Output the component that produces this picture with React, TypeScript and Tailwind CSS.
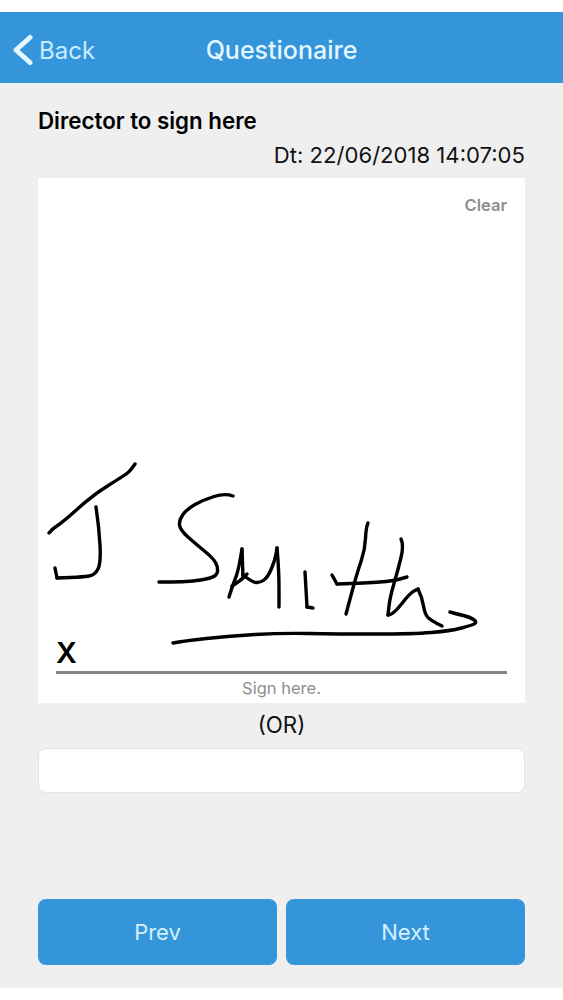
import React from "react";

type Pt = [number, number];

// signature strokes, page coordinates
const strokes: Pt[][] = [
  [[49, 533], [52, 529], [63, 522], [93, 495], [125, 475], [130, 471], [135, 464]],
  [[96, 507], [99, 527], [101, 563], [95, 575], [83, 577], [57, 578]],
  [[57, 578], [55, 568]],
  [[233, 496], [225, 493], [203, 500], [187, 509], [179, 520], [180, 530], [197, 545], [213, 558], [218, 567], [217, 576], [203, 580], [183, 582], [159, 582]],
  [[229, 597], [232, 587], [238, 572], [242, 549]],
  [[242, 549], [243, 577]],
  [[232, 586], [240, 581], [247, 574]],
  [[243, 575], [252, 582], [260, 583], [268, 577], [275, 560], [277, 548]],
  [[277, 548], [279, 570], [279, 607]],
  [[305, 572], [307, 607]],
  [[307, 607], [313, 608]],
  [[368, 523], [366, 527], [365, 550], [357, 573], [346, 614]],
  [[332, 575], [337, 584]],
  [[337, 584], [367, 583], [393, 581], [407, 577]],
  [[401, 539], [404, 545], [398, 570], [390, 597], [388, 615]],
  [[388, 615], [393, 615], [410, 593], [418, 589]],
  [[418, 589], [422, 597], [425, 615], [432, 621], [442, 626]],
  [[173, 643], [183, 641], [230, 636], [280, 633], [337, 634], [413, 634], [450, 631], [473, 625], [477, 622], [470, 617], [457, 614], [450, 612]],
];

function toPath(pts: Pt[]) {
  let d = `M${pts[0][0]} ${pts[0][1]}`;
  for (let i = 1; i < pts.length - 1; i++) {
    const mx = (pts[i][0] + pts[i + 1][0]) / 2;
    const my = (pts[i][1] + pts[i + 1][1]) / 2;
    d += ` Q${pts[i][0]} ${pts[i][1]} ${mx} ${my}`;
  }
  const last = pts[pts.length - 1];
  return d + ` L${last[0]} ${last[1]}`;
}

function Signature() {
  return (
    <svg
      className="absolute inset-0 h-full w-full"
      viewBox="38 178 487 525"
      fill="none"
      stroke="#000"
      strokeWidth="3.4"
      strokeLinecap="round"
      strokeLinejoin="round"
    >
      {strokes.map((s, i) => (
        <path key={i} d={toPath(s)} />
      ))}
    </svg>
  );
}

export default function App() {
  return (
    <div className="min-h-[1000px] bg-white pt-3 pb-3 font-['Inter','Liberation_Sans',sans-serif]">
      <div className="flex h-[976px] flex-col bg-[#efeff0]">
        <header className="relative flex h-[71px] shrink-0 items-center justify-center bg-[#3595db]">
          <div className="absolute left-[12px] top-[22px] flex items-center gap-[5px]">
            <svg width="22" height="32" viewBox="0 0 22 32" fill="none" stroke="#e4f6ff" strokeWidth="5" strokeLinecap="round" strokeLinejoin="round">
              <path d="M18 3.5 4 16l14 12.5" />
            </svg>
            <span className="pt-[2px] text-[24px] leading-none text-[#c8ecff]">Back</span>
          </div>
          <h1 className="pt-[6px] text-[25px] font-medium text-[#e4f6ff]">Questionaire</h1>
        </header>

        <main className="flex flex-1 flex-col px-[38px]">
          <h2 className="mt-[25px] text-[22.3px] leading-[26px] font-semibold text-black">Director to sign here</h2>
          <div className="mt-[8px] text-right text-[22.1px] leading-[26px] text-[#111]">Dt: 22/06/2018 14:07:05</div>

          <div className="relative mt-[10px] flex h-[525px] flex-col bg-white">
            <div className="pt-[17px] pr-[18px] text-right text-[16.5px] leading-[20px] font-semibold text-[#8e8e93]">Clear</div>
            <div className="mt-auto px-[18px]">
              <div className="pt-[1px] text-[29px] leading-[32px] font-semibold text-black">X</div>
              <div className="mt-[2px] h-[3px] bg-[#858585]" />
            </div>
            <div className="pt-[4px] pb-[5px] text-center text-[16.5px] leading-[20px] text-[#8e8e93]">Sign here.</div>
            <Signature />
          </div>

          <div className="mt-[9px] text-center text-[22.3px] leading-[26px] text-[#111]">(OR)</div>
          <input className="mt-[10px] h-[45px] w-full rounded-lg border border-[#e4e4e6] bg-white" />

          <div className="mt-auto mb-[23px] flex gap-[9px]">
            <button className="h-[66px] flex-1 rounded-lg bg-[#3595db] text-[22px] text-[#d4f0ff]">Prev</button>
            <button className="h-[66px] flex-1 rounded-lg bg-[#3595db] text-[22px] text-[#d4f0ff]">Next</button>
          </div>
        </main>
      </div>
    </div>
  );
}
